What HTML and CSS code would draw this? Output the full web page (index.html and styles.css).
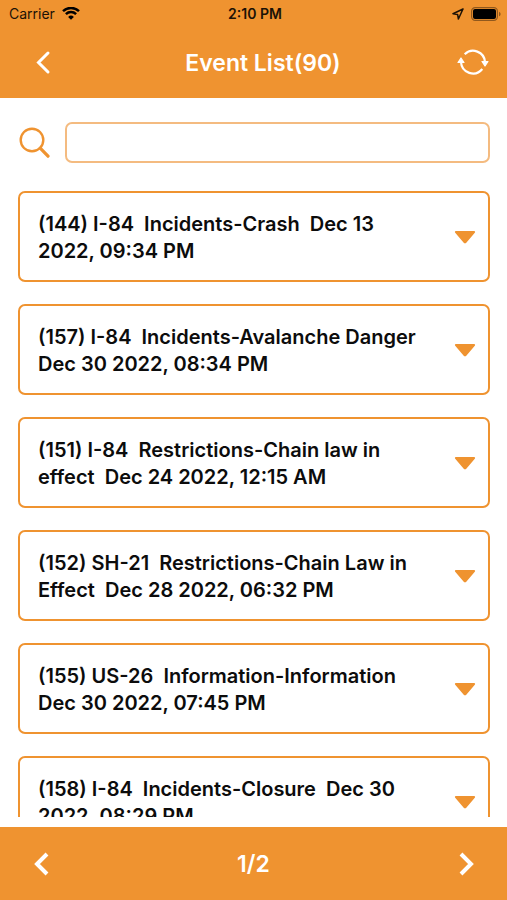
FILE: index.html
```html
<!DOCTYPE html>
<html lang="en">
<head>
<meta charset="utf-8">
<meta name="viewport" content="width=device-width, initial-scale=1">
<title>Event List</title>
<link rel="stylesheet" href="styles.css">
</head>
<body>
<svg class="sprite" aria-hidden="true">
  <symbol id="caret" viewBox="0 0 22 14"><path d="M2 0h18a1 1 0 0 1 .8 1.700l-8.300 9.800a2 2 0 0 1-3 0L1.200 1.700A1 1 0 0 1 2 0z" fill="currentColor"/></symbol>
</svg>
<header class="top">
  <div class="status">
    <div class="carrier">
      <span>Carrier</span>
      <svg width="18" height="14" viewBox="0 0 18 14" fill="none" stroke="#000" stroke-width="2.500"><path d="M1 4.200a11.500 11.500 0 0 1 16 0M3.900 7.200a7.300 7.300 0 0 1 10.200 0"/><path d="M9 12.800L6.100 9.900a4.100 4.100 0 0 1 5.800 0z" fill="#000" stroke="none"/></svg>
    </div>
    <span class="clock">2:10 PM</span>
    <div class="power">
      <svg width="12" height="12" viewBox="0 0 12 12" fill="none" stroke="currentColor" stroke-width="1.500" stroke-linejoin="round"><path d="M11 1L1 5.800l4.600.6.800 4.600z"/></svg>
      <svg width="30" height="14" viewBox="0 0 30 14"><rect x=".6" y=".6" width="25.800" height="12.800" rx="3.600" fill="none" stroke="currentColor" stroke-opacity=".45" stroke-width="1.200"/><rect x="2" y="2" width="23" height="10" rx="2" fill="#000"/><path d="M28 4.700v4.600c1-.4 1.600-1.300 1.600-2.300s-.6-1.900-1.600-2.300z" fill="currentColor" fill-opacity=".45"/></svg>
    </div>
  </div>
  <nav class="bar">
    <button class="icon-button" type="button" aria-label="Back">
      <svg width="26" height="26" viewBox="0 0 26 26" fill="none" stroke="currentColor" stroke-width="3" stroke-linecap="round"><path d="M18 3L8.500 12.500L18 22"/></svg>
    </button>
    <h1>Event List(90)</h1>
    <button class="icon-button" type="button" aria-label="Refresh">
      <svg width="32" height="28" viewBox="0 0 32 28" fill="none" stroke="currentColor" stroke-width="2.200"><path d="M7.700 5.200A12 12 0 0 1 28 13M25.300 20A12 12 0 0 1 4 13"/><path d="M25 12.500h6l-3 4.500zM1 13.500h6L4 9z" fill="currentColor" stroke="currentColor" stroke-width="1.200" stroke-linejoin="round"/></svg>
    </button>
  </nav>
</header>
<main>
  <form class="search" role="search">
    <label for="query" aria-label="Search events">
      <svg width="32" height="32" viewBox="0 0 32 32" fill="none" stroke="currentColor"><circle cx="14" cy="13" r="11.300" stroke-width="2.400"/><path d="M22.200 21.200l7.800 8" stroke-width="3.200" stroke-linecap="round"/></svg>
    </label>
    <input id="query" type="text">
  </form>
  <ul class="events">
    <li><button class="event" type="button"><span>(144) I-84  Incidents-Crash  Dec 13 2022, 09:34 PM</span><svg class="caret"><use href="#caret"/></svg></button></li>
    <li><button class="event" type="button"><span>(157) I-84  Incidents-Avalanche Danger  Dec 30 2022, 08:34 PM</span><svg class="caret"><use href="#caret"/></svg></button></li>
    <li><button class="event" type="button"><span>(151) I-84  Restrictions-Chain law in effect  Dec 24 2022, 12:15 AM</span><svg class="caret"><use href="#caret"/></svg></button></li>
    <li><button class="event" type="button"><span>(152) SH-21  Restrictions-Chain Law in Effect  Dec 28 2022, 06:32 PM</span><svg class="caret"><use href="#caret"/></svg></button></li>
    <li><button class="event" type="button"><span>(155) US-26  Information-Information  Dec 30 2022, 07:45 PM</span><svg class="caret"><use href="#caret"/></svg></button></li>
    <li><button class="event" type="button"><span>(158) I-84  Incidents-Closure  Dec 30 2022, 08:29 PM</span><svg class="caret"><use href="#caret"/></svg></button></li>
  </ul>
</main>
<footer class="pager">
  <button class="icon-button" type="button" aria-label="Previous page">
    <svg width="26" height="26" viewBox="0 0 26 26" fill="none" stroke="currentColor" stroke-width="4"><path d="M19 3L9 13l10 10"/></svg>
  </button>
  <span>1/2</span>
  <button class="icon-button" type="button" aria-label="Next page">
    <svg width="26" height="26" viewBox="0 0 26 26" fill="none" stroke="currentColor" stroke-width="4"><path d="M8 3l10 10L8 23"/></svg>
  </button>
</footer>
</body>
</html>
```
FILE: styles.css
```css
:root {
  --orange: #ef9330;
  --orange-soft: #f4bb80;
}

* {
  box-sizing: border-box;
}

body {
  display: flex;
  flex-direction: column;
  height: 100vh;
  margin: 0;
  background: #fff;
  color: #0c0c0c;
  font-family: Inter, "Liberation Sans", sans-serif;
}

svg {
  display: block;
  flex: none;
}

button {
  margin: 0;
  border: 0;
  background: none;
  color: inherit;
  font: inherit;
}

.sprite {
  position: absolute;
  width: 0;
  height: 0;
}

.top {
  flex: none;
  background: var(--orange);
}

.status {
  display: grid;
  grid-template-columns: 1fr auto 1fr;
  align-items: center;
  height: 27px;
  padding: 0 6px 0 9px;
  color: #1c1206;
  font-size: 14px;
}

.carrier,
.power {
  display: flex;
  align-items: center;
  gap: 7px;
}

.power {
  justify-content: flex-end;
}

.clock {
  font-weight: 600;
}

.bar,
.pager {
  display: grid;
  align-items: center;
  color: #fff;
  text-align: center;
}

.bar {
  grid-template-columns: 42px 1fr 32px;
  height: 71px;
  padding: 0 18px 0 27px;
}

.bar h1 {
  margin: 0;
  font-size: 23px;
  font-weight: 600;
}

.icon-button {
  display: flex;
  justify-content: center;
  width: 32px;
  padding: 0;
}

main {
  display: flex;
  flex: 1;
  flex-direction: column;
  min-height: 0;
  padding: 24px 17px 10px 18px;
}

.search {
  display: flex;
  align-items: center;
  gap: 15px;
  margin-bottom: 28px;
}

.search label {
  color: var(--orange);
}

.search input {
  flex: 1;
  min-width: 0;
  height: 41px;
  padding: 0 12px;
  border: 2px solid var(--orange-soft);
  border-radius: 7px;
  background: #fff;
  font: inherit;
  font-size: 20px;
}

.events {
  display: flex;
  flex: 1;
  flex-direction: column;
  gap: 22px;
  min-height: 0;
  margin: 0;
  padding: 0;
  overflow: hidden;
  list-style: none;
}

.event {
  display: flex;
  align-items: center;
  justify-content: space-between;
  gap: 20px;
  width: 100%;
  padding: 18px 12px 15px 18px;
  border: 2px solid var(--orange);
  border-radius: 7px;
  font-size: 20px;
  font-weight: 600;
  line-height: 27px;
  text-align: left;
  white-space: pre-wrap;
}

.caret {
  width: 22px;
  height: 14px;
  color: var(--orange);
}

.pager {
  grid-template-columns: 32px 1fr 32px;
  flex: none;
  height: 73px;
  padding: 0 25px;
  background: var(--orange);
  font-size: 23px;
  font-weight: 600;
}
```
